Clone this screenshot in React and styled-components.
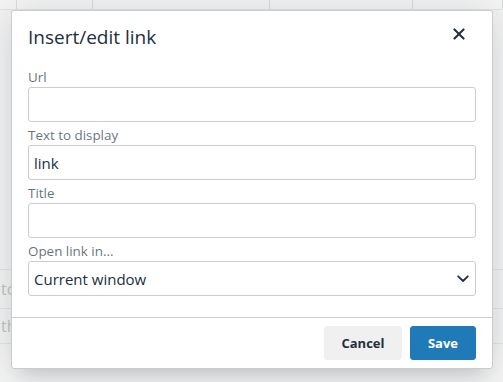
import React from "react";
import styled, { createGlobalStyle } from "styled-components";

const GlobalStyle = createGlobalStyle`
  html, body {
    margin: 0;
    padding: 0;
    background: #f3f3f3;
  }
  * {
    box-sizing: border-box;
  }
`;

const Backdrop = styled.div`
  position: relative;
  width: 503px;
  height: 382px;
  overflow: hidden;
  background: #f3f3f3;
  font-family: "Open Sans", "Noto Sans", sans-serif;
  display: flex;
  flex-direction: column;
`;

const TopRow = styled.div`
  display: flex;
  height: 10px;
  border-bottom: 1px solid #e4e4e4;
  background: #f6f6f6;
`;

const TopCell = styled.div`
  width: ${(p) => p.$width}px;
  flex: ${(p) => (p.$width ? "none" : 1)};
  border-right: 1px solid #dcdcdc;
`;

const Rows = styled.div`
  margin-top: 259px;
  display: flex;
  flex-direction: column;
`;

const Row = styled.div`
  height: ${(p) => p.$height}px;
  border-top: 1px solid #e2e2e2;
  display: flex;
  align-items: center;
  padding-left: 1px;
  font-size: 16px;
  color: #c2c2c2;
  white-space: nowrap;
`;

const Dialog = styled.div`
  position: absolute;
  left: 11px;
  top: 10px;
  width: 482px;
  background: #fff;
  border: 1px solid #cccccc;
  border-radius: 3px;
  box-shadow: 0 16px 16px -10px rgba(34, 47, 62, 0.15),
    0 0 40px 1px rgba(34, 47, 62, 0.15);
  display: flex;
  flex-direction: column;
  color: #222f3e;
`;

const Header = styled.div`
  display: flex;
  justify-content: space-between;
  align-items: flex-start;
  padding: 6px 16px 0 16px;
`;

const Title = styled.h1`
  margin: 7px 0 0 0;
  font-size: 19px;
  line-height: 26px;
  font-weight: 400;
  color: #222f3e;
`;

const CloseButton = styled.button`
  width: 34px;
  height: 34px;
  border: none;
  background: transparent;
  padding: 0;
  display: flex;
  align-items: center;
  justify-content: center;
  color: #222f3e;
  cursor: pointer;
`;

const Body = styled.div`
  padding: 17px 16px 17px 16px;
  display: flex;
  flex-direction: column;
`;

const Group = styled.div`
  display: flex;
  flex-direction: column;
  margin-bottom: 4px;
`;

const Label = styled.label`
  font-size: 13.4px;
  line-height: 19px;
  color: rgba(34, 47, 62, 0.7);
`;

const Field = styled.div`
  height: 35px;
  border: 1px solid #cccccc;
  border-radius: 3px;
  background: #fff;
  display: flex;
  align-items: center;
  padding: 0 6px 0 5px;
  font-size: 15px;
  color: #222f3e;
`;

const Value = styled.span`
  flex: 1;
`;

const Footer = styled.div`
  border-top: 1px solid #cccccc;
  padding: 8px 16px;
  display: flex;
  justify-content: flex-end;
  gap: 8px;
`;

const Button = styled.button`
  height: 34px;
  width: ${(p) => p.$width}px;
  border-radius: 3px;
  border: 1px solid ${(p) => (p.$primary ? "#207ab7" : "#f0f0f0")};
  background: ${(p) => (p.$primary ? "#207ab7" : "#f0f0f0")};
  color: ${(p) => (p.$primary ? "#fff" : "#222f3e")};
  font-family: "Open Sans", "Noto Sans", sans-serif;
  font-size: 13px;
  font-weight: 700;
  padding: 0;
  cursor: pointer;
`;

const CloseIcon = () => (
  <svg width="24" height="24" viewBox="0 0 24 24" fill="currentColor">
    <path d="M17.3 8.2L13.4 12l3.9 3.8a1 1 0 01-1.5 1.5L12 13.4l-3.8 3.9a1 1 0 01-1.5-1.5l3.9-3.8-3.9-3.8a1 1 0 011.5-1.5l3.8 3.9 3.8-3.9a1 1 0 011.5 1.5z" />
  </svg>
);

const Chevron = () => (
  <svg width="12" height="8" viewBox="0 0 12 8" fill="none">
    <path d="M1.2 1.3L6 6l4.8-4.7" stroke="#222f3e" strokeWidth="1.8" strokeLinecap="round" strokeLinejoin="round" />
  </svg>
);

const fields = [
  { label: "Url", value: "" },
  { label: "Text to display", value: "link" },
  { label: "Title", value: "" },
];

export default function App() {
  return (
    <>
      <GlobalStyle />
      <Backdrop>
        <TopRow>
          <TopCell $width={17} />
          <TopCell $width={76} />
          <TopCell $width={177} />
          <TopCell $width={143} />
          <TopCell />
        </TopRow>
        <Rows>
          <Row $height={39}>to</Row>
          <Row $height={35}>th</Row>
          <Row $height={30} />
        </Rows>

        <Dialog>
          <Header>
            <Title>Insert/edit link</Title>
            <CloseButton aria-label="Close">
              <CloseIcon />
            </CloseButton>
          </Header>
          <Body>
            {fields.map((f) => (
              <Group key={f.label}>
                <Label>{f.label}</Label>
                <Field>
                  <Value>{f.value}</Value>
                </Field>
              </Group>
            ))}
            <Group>
              <Label>Open link in...</Label>
              <Field>
                <Value>Current window</Value>
                <Chevron />
              </Field>
            </Group>
          </Body>
          <Footer>
            <Button $width={78}>Cancel</Button>
            <Button $width={66} $primary>
              Save
            </Button>
          </Footer>
        </Dialog>
      </Backdrop>
    </>
  );
}
